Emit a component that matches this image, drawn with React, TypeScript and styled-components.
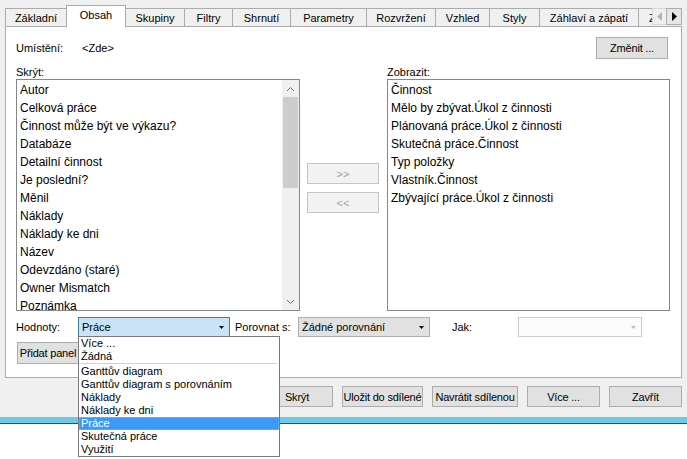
import React from 'react';
import styled, { createGlobalStyle } from 'styled-components';

const GlobalStyle = createGlobalStyle`
  html, body { margin: 0; padding: 0; background: #ffffff; }
  body {
    font-family: "Liberation Sans", Arial, sans-serif;
    font-size: 11px;
    color: #000;
  }
`;

const tabs = [
  { label: 'Základní', w: 62 },
  { label: 'Obsah', w: 60, active: true },
  { label: 'Skupiny', w: 60 },
  { label: 'Filtry', w: 49 },
  { label: 'Shrnutí', w: 59 },
  { label: 'Parametry', w: 77 },
  { label: 'Rozvržení', w: 70 },
  { label: 'Vzhled', w: 55 },
  { label: 'Styly', w: 51 },
  { label: 'Záhlaví a zápatí', w: 100 },
  { label: 'Zdroje', w: 80, clipped: true },
];

const hiddenFields = [
  'Autor',
  'Celková práce',
  'Činnost může být ve výkazu?',
  'Databáze',
  'Detailní činnost',
  'Je poslední?',
  'Měnil',
  'Náklady',
  'Náklady ke dni',
  'Název',
  'Odevzdáno (staré)',
  'Owner Mismatch',
  'Poznámka',
];

const shownFields = [
  'Činnost',
  'Mělo by zbývat.Úkol z činnosti',
  'Plánovaná práce.Úkol z činnosti',
  'Skutečná práce.Činnost',
  'Typ položky',
  'Vlastník.Činnost',
  'Zbývající práce.Úkol z činnosti',
];

const valueOptions = [
  'Více ...',
  'Žádná',
  '-',
  'Ganttův diagram',
  'Ganttův diagram s porovnáním',
  'Náklady',
  'Náklady ke dni',
  'Práce',
  'Skutečná práce',
  'Využití',
];

const bottomButtons = [
  { label: 'Skrýt', w: 72 },
  { label: 'Uložit do sdílené', w: 81 },
  { label: 'Navrátit sdílenou', w: 86 },
  { label: 'Více ...', w: 73 },
  { label: 'Zavřít', w: 73 },
];

const Screen = styled.div`
  width: 687px;
  height: 459px;
  overflow: hidden;
  background: #fff;
`;

const Dialog = styled.div`
  height: 417px;
  box-sizing: border-box;
  background: #f0f0f0;
  padding-top: 5px;
`;

const Stripe = styled.div`
  height: 6px;
  background: #6cc8e4;
  border-bottom: 1px solid #4a4a4a;
`;

const TabStrip = styled.div`
  display: flex;
  align-items: flex-end;
  height: 22px;
  width: 677px;
  margin-left: 5px;
  position: relative;
  z-index: 1;
`;

const TabList = styled.div`
  flex: 1;
  display: flex;
  align-items: flex-end;
  height: 100%;
  overflow: hidden;
`;

const Tab = styled.div<{ $w: number; $active?: boolean; $clipped?: boolean }>`
  flex: none;
  box-sizing: border-box;
  width: ${p => p.$w}px;
  height: ${p => (p.$active ? 22 : 18)}px;
  margin-right: -1px;
  margin-bottom: ${p => (p.$active ? 0 : 1)}px;
  border: 1px solid #acacac;
  border-bottom: none;
  background: ${p => (p.$active ? '#ffffff' : '#f0f0f0')};
  display: flex;
  align-items: center;
  justify-content: ${p => (p.$clipped ? 'flex-start' : 'center')};
  padding-left: ${p => (p.$clipped ? 10 : 0)}px;
  padding-bottom: ${p => (p.$active ? 3 : 0)}px;
  white-space: nowrap;
  position: relative;
  z-index: ${p => (p.$active ? 2 : 1)};
`;

const TabArrows = styled.div`
  flex: none;
  display: flex;
  margin-bottom: 2px;
  position: relative;
  z-index: 3;
`;

const TabArrow = styled.div<{ $disabled?: boolean }>`
  box-sizing: border-box;
  width: 15px;
  height: 17px;
  border: 1px solid ${p => (p.$disabled ? '#d9d9d9' : '#adadad')};
  background: ${p => (p.$disabled ? '#f0f0f0' : '#e5e5e5')};
  display: flex;
  align-items: center;
  justify-content: center;
  & + & { margin-left: -1px; width: 16px; }
`;

const Panel = styled.div`
  margin: -1px 0 0 5px;
  width: 677px;
  height: 352px;
  box-sizing: border-box;
  border: 1px solid #acacac;
  background: #fff;
  padding: 10px 11px 0 10px;
  display: flex;
  flex-direction: column;
`;

const LocationRow = styled.div`
  display: flex;
  align-items: center;
  height: 22px;
`;

const FieldLabel = styled.span<{ $w: number; $gap?: number }>`
  flex: none;
  width: ${p => p.$w}px;
  margin-left: ${p => p.$gap ?? 0}px;
  white-space: nowrap;
`;

const Spacer = styled.div`
  flex: 1;
`;

const Button = styled.div<{ $w: number; $h?: number }>`
  flex: none;
  box-sizing: border-box;
  width: ${p => p.$w}px;
  height: ${p => p.$h ?? 21}px;
  border: 1px solid #adadad;
  background: #e1e1e1;
  display: flex;
  align-items: center;
  justify-content: center;
  white-space: nowrap;
  letter-spacing: -0.2px;
`;

const ChangeButton = styled(Button)`
  margin-right: 2px;
`;

const ListsGrid = styled.div`
  margin-top: 7px;
  display: grid;
  grid-template-columns: 284px 87px 283px;
  grid-template-rows: 13px 232px;
`;

const ListLabel = styled.div`
  line-height: 13px;
`;

const ListBox = styled.div`
  box-sizing: border-box;
  height: 232px;
  border: 1px solid #828790;
  display: flex;
  overflow: hidden;
  background: #fff;
`;

const ListItems = styled.div`
  flex: 1;
  overflow: hidden;
  padding-top: 1px;
`;

const ListItem = styled.div`
  height: 18px;
  line-height: 18px;
  padding-left: 3px;
  font-size: 12px;
  white-space: nowrap;
`;

const ScrollBar = styled.div`
  flex: none;
  width: 17px;
  background: #f0f0f0;
  display: flex;
  flex-direction: column;
`;

const ScrollButton = styled.div`
  height: 17px;
  display: flex;
  align-items: center;
  justify-content: center;
`;

const ScrollThumb = styled.div`
  height: 91px;
  margin: 0 1px;
  background: #cdcdcd;
`;

const ScrollTrack = styled.div`
  flex: 1;
`;

const MoveColumn = styled.div`
  display: flex;
  flex-direction: column;
  gap: 8px;
  padding: 84px 0 0 7px;
`;

const MoveButton = styled.div`
  box-sizing: border-box;
  width: 72px;
  height: 21px;
  border: 1px solid #c4c4c4;
  background: #f2f2f2;
  color: #a3a3a3;
  display: flex;
  align-items: center;
  justify-content: center;
`;

const ValuesRow = styled.div`
  margin-top: 6px;
  display: flex;
  align-items: center;
  height: 20px;
`;

const Combo = styled.div<{ $w: number; $variant: 'focused' | 'normal' | 'disabled' }>`
  flex: none;
  position: relative;
  box-sizing: border-box;
  width: ${p => p.$w}px;
  height: 20px;
  padding-left: 3px;
  display: flex;
  align-items: center;
  border: 1px solid
    ${p => (p.$variant === 'focused' ? '#3c7fb1' : p.$variant === 'normal' ? '#adadad' : '#cccccc')};
  background: ${p => (p.$variant === 'focused' ? '#c9e4f6' : p.$variant === 'normal' ? '#e1e1e1' : '#fcfcfc')};
`;

const ComboText = styled.span`
  flex: 1;
  white-space: nowrap;
  overflow: hidden;
`;

const ComboArrow = styled.svg`
  flex: none;
  margin-right: 5px;
`;

const DropList = styled.div`
  position: absolute;
  top: 18px;
  left: -1px;
  width: 202px;
  box-sizing: border-box;
  border: 1px solid #7a7a7a;
  background: #fff;
  z-index: 10;
`;

const DropItem = styled.div<{ $selected?: boolean }>`
  height: 13px;
  line-height: 13px;
  padding-left: 2px;
  white-space: nowrap;
  background: ${p => (p.$selected ? '#3d99f5' : 'transparent')};
  color: ${p => (p.$selected ? '#ffffff' : '#000000')};
  outline: ${p => (p.$selected ? '1px dotted #f0a050' : 'none')};
  outline-offset: -1px;
`;

const DropSeparator = styled.div`
  height: 2px;
  margin: 0 2px;
  box-sizing: border-box;
  border-top: 1px solid #d0d0d0;
`;

const AddRow = styled.div`
  margin-top: 5px;
  padding-left: 1px;
  display: flex;
`;

const ButtonBar = styled.div`
  margin-top: 8px;
  height: 21px;
  padding-right: 5px;
  display: flex;
  justify-content: flex-end;
  gap: 9px;
`;

const Chevron = ({ up }: { up?: boolean }) => (
  <svg width="9" height="6" viewBox="0 0 9 6">
    <polyline
      points={up ? '1,5 4.5,1.5 8,5' : '1,1 4.5,4.5 8,1'}
      fill="none"
      stroke="#707070"
      strokeWidth="1"
    />
  </svg>
);

const Triangle = ({ color }: { color: string }) => (
  <ComboArrow width="5" height="3" viewBox="0 0 5 3">
    <polygon points="0,0 5,0 2.5,3" fill={color} />
  </ComboArrow>
);

export default function App() {
  return (
    <Screen>
      <GlobalStyle />
      <Dialog>
        <TabStrip>
          <TabList>
            {tabs.map(t => (
              <Tab key={t.label} $w={t.w} $active={t.active} $clipped={t.clipped}>
                {t.label}
              </Tab>
            ))}
          </TabList>
          <TabArrows>
            <TabArrow $disabled>
              <svg width="5" height="9" viewBox="0 0 5 9">
                <polygon points="5,0 5,9 0,4.5" fill="#b4b4b4" />
              </svg>
            </TabArrow>
            <TabArrow>
              <svg width="5" height="9" viewBox="0 0 5 9">
                <polygon points="0,0 0,9 5,4.5" fill="#000" />
              </svg>
            </TabArrow>
          </TabArrows>
        </TabStrip>

        <Panel>
          <LocationRow>
            <FieldLabel $w={66}>Umístění:</FieldLabel>
            <span>&lt;Zde&gt;</span>
            <Spacer />
            <ChangeButton $w={72} $h={22}>Změnit ...</ChangeButton>
          </LocationRow>

          <ListsGrid>
            <ListLabel>Skrýt:</ListLabel>
            <div />
            <ListLabel>Zobrazit:</ListLabel>

            <ListBox>
              <ListItems>
                {hiddenFields.map(f => (
                  <ListItem key={f}>{f}</ListItem>
                ))}
              </ListItems>
              <ScrollBar>
                <ScrollButton>
                  <Chevron up />
                </ScrollButton>
                <ScrollThumb />
                <ScrollTrack />
                <ScrollButton>
                  <Chevron />
                </ScrollButton>
              </ScrollBar>
            </ListBox>
            <MoveColumn>
              <MoveButton>&gt;&gt;</MoveButton>
              <MoveButton>&lt;&lt;</MoveButton>
            </MoveColumn>
            <ListBox>
              <ListItems>
                {shownFields.map(f => (
                  <ListItem key={f}>{f}</ListItem>
                ))}
              </ListItems>
            </ListBox>
          </ListsGrid>

          <ValuesRow>
            <FieldLabel $w={62}>Hodnoty:</FieldLabel>
            <Combo $w={152} $variant="focused">
              <ComboText>Práce</ComboText>
              <Triangle color="#000" />
              <DropList>
                {valueOptions.map((o, i) =>
                  o === '-' ? (
                    <DropSeparator key={i} />
                  ) : (
                    <DropItem key={o} $selected={o === 'Práce'}>
                      {o}
                    </DropItem>
                  )
                )}
              </DropList>
            </Combo>
            <FieldLabel $w={63} $gap={5}>Porovnat s:</FieldLabel>
            <Combo $w={132} $variant="normal">
              <ComboText>Žádné porovnání</ComboText>
              <Triangle color="#000" />
            </Combo>
            <FieldLabel $w={66} $gap={22}>Jak:</FieldLabel>
            <Combo $w={124} $variant="disabled">
              <ComboText />
              <Triangle color="#bdbdbd" />
            </Combo>
          </ValuesRow>

          <AddRow>
            <Button $w={62} $h={22}>Přidat panel</Button>
          </AddRow>
        </Panel>

        <ButtonBar>
          {bottomButtons.map(b => (
            <Button key={b.label} $w={b.w}>
              {b.label}
            </Button>
          ))}
        </ButtonBar>
      </Dialog>
      <Stripe />
    </Screen>
  );
}
